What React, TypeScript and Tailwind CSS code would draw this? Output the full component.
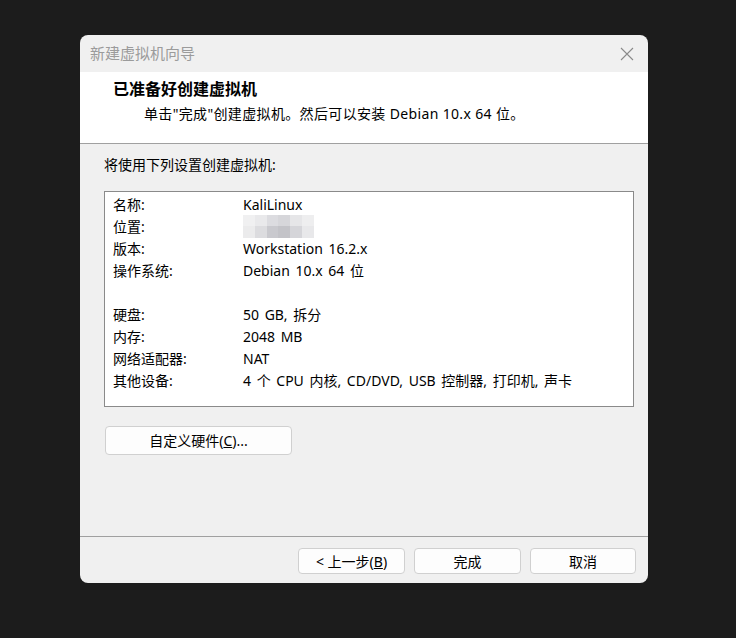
import React from 'react';

const font = { fontFamily: '"Noto Sans", "Noto Sans CJK SC", sans-serif' };

const rows: [string, string][] = [
  ['名称:', 'KaliLinux'],
  ['位置:', ''],
  ['版本:', 'Workstation 16.2.x'],
  ['操作系统:', 'Debian 10.x 64 位'],
  ['', ''],
  ['硬盘:', '50 GB, 拆分'],
  ['内存:', '2048 MB'],
  ['网络适配器:', 'NAT'],
  ['其他设备:', '4 个 CPU 内核, CD/DVD, USB 控制器, 打印机, 声卡'],
];

// pixelated privacy blur over the location path
const blurTop = ['#f0f0f1', '#e9e9eb', '#dcdce0', '#d6d6da', '#e6e6e8', '#eeeeef'];
const blurBottom = ['#ebebec', '#dcdcdf', '#c9c9ce', '#c3c3c8', '#d5d5d9', '#e8e8ea'];

const Blur = () => (
  <div className="flex h-[23px] w-[71px] flex-col">
    <div className="flex h-[11px]">
      {blurTop.map((c, i) => (
        <div key={i} className="h-full flex-1" style={{ background: c }} />
      ))}
    </div>
    <div className="flex h-[12px]">
      {blurBottom.map((c, i) => (
        <div key={i} className="h-full flex-1" style={{ background: c }} />
      ))}
    </div>
  </div>
);

const WinButton = ({ children, className = '' }: { children: React.ReactNode; className?: string }) => (
  <button className={`flex h-[26px] items-center justify-center rounded-[4px] border border-[#d0d0d0] bg-[#fdfdfd] text-[14px] text-black ${className}`}>
    {children}
  </button>
);

export default function App() {
  return (
    <div className="flex h-[638px] w-[736px] bg-[#1c1c1c] pl-[80px] pt-[35px]" style={font}>
      <div className="flex h-[548px] w-[568px] flex-col overflow-hidden rounded-[8px] bg-[#f0f0f0]">
        {/* title bar */}
        <div className="flex h-[37px] items-center justify-between pl-[10px] pr-[14px]">
          <span className="text-[15px] text-[#9b9b9b]">新建虚拟机向导</span>
          <svg width="14" height="14" viewBox="0 0 14 14" className="text-[#8a8a8a]">
            <path d="M1 1L13 13M13 1L1 13" stroke="currentColor" strokeWidth="1.1" fill="none" />
          </svg>
        </div>

        {/* header */}
        <div className="h-[72px] border-b border-[#a0a0a0] bg-white pl-[33px] pt-[6px]">
          <div className="h-[22px] text-[16px] font-bold leading-[22px] text-black">已准备好创建虚拟机</div>
          <div className="mt-[3px] h-[22px] pl-[31px] text-[14px] leading-[22px] tracking-[0.35px] text-black">
            单击"完成"创建虚拟机。然后可以安装 Debian 10.x 64 位。
          </div>
        </div>

        {/* body */}
        <div className="flex flex-1 flex-col pl-[24px]">
          <div className="mt-[11px] h-[20px] text-[14px] leading-[20px] text-black">将使用下列设置创建虚拟机:</div>
          <div className="mt-[16px] h-[216px] w-[530px] border border-[#8a8a8a] bg-white pl-[8px] pt-[1px]">
            {rows.map(([k, v], i) => (
              <div key={i} className="flex h-[22px] items-center text-[14px] text-black">
                <span className="w-[130px] shrink-0">{k}</span>
                {i === 1 ? <Blur /> : <span className="[word-spacing:2px]">{v}</span>}
              </div>
            ))}
          </div>
          <WinButton className="ml-[1px] mt-[19px] h-[29px] w-[187px]">
            自定义硬件(<span className="underline">C</span>)...
          </WinButton>
        </div>

        {/* footer */}
        <div className="flex h-[47px] items-start justify-end gap-[9px] border-t border-[#a0a0a0] pr-[12px] pt-[11px]">
          <WinButton className="w-[107px]">
            &lt; 上一步(<span className="underline">B</span>)
          </WinButton>
          <WinButton className="w-[107px]">完成</WinButton>
          <WinButton className="w-[106px]">取消</WinButton>
        </div>
      </div>
    </div>
  );
}
